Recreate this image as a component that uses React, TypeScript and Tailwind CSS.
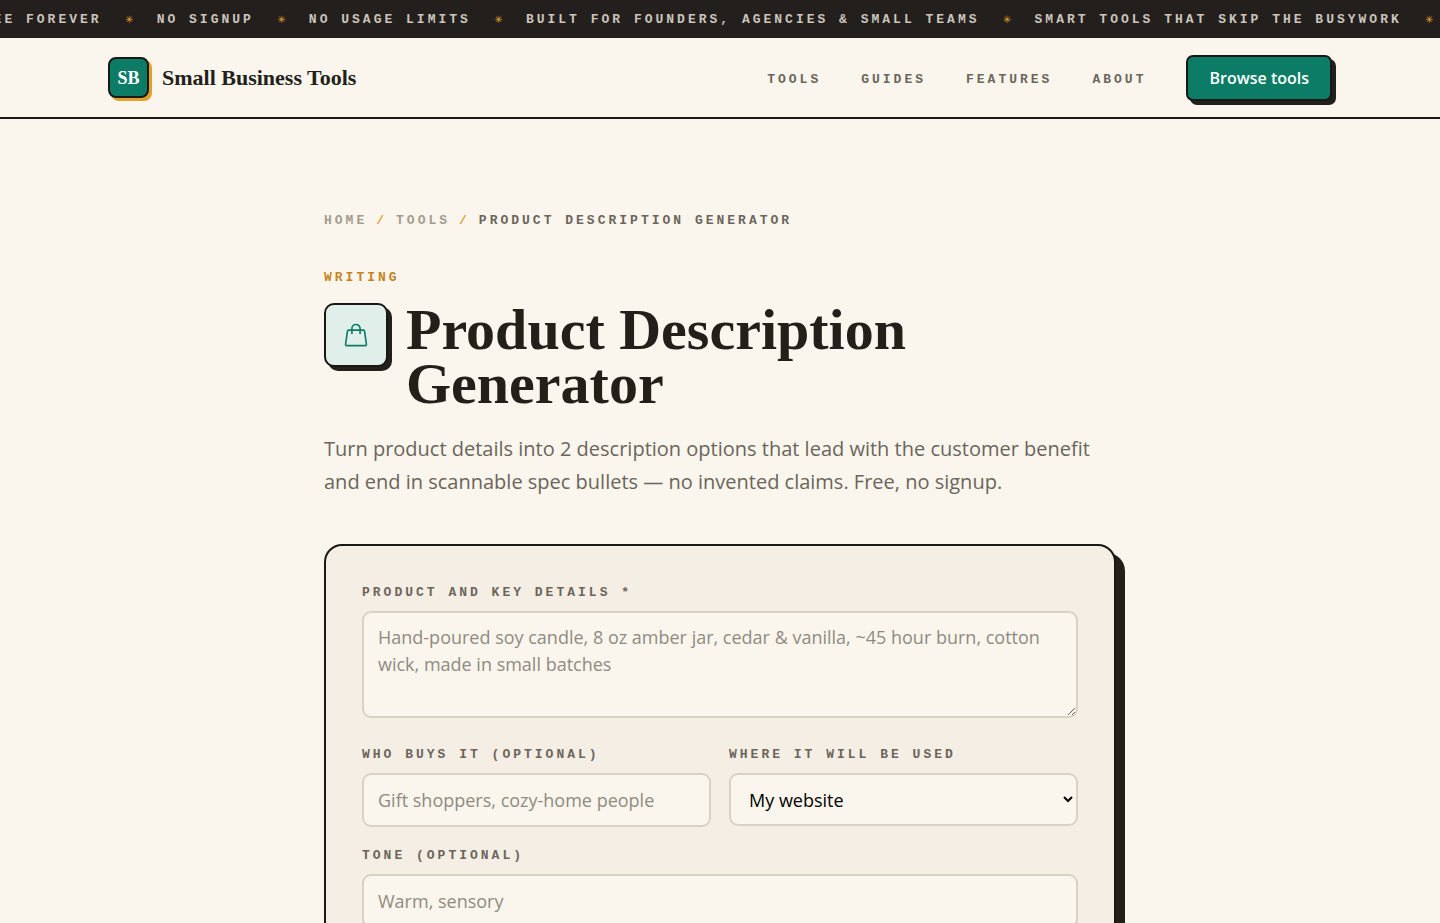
import React from "react";

const mono = "font-['Liberation_Mono',monospace] text-[13px] leading-[21px] font-bold tracking-[3px] uppercase";
const serif = "font-['Liberation_Serif',serif] font-bold";
const field =
  "w-full rounded-[9px] border-2 border-[#d6d3c6] bg-[#faf6ed] px-3.5 text-lg leading-[27px] placeholder:text-[#8f8b81]";

const perks = [
  "Free forever",
  "No signup",
  "No usage limits",
  "Built for founders, agencies & small teams",
  "Smart tools that skip the busywork",
];

const Ticker = () => (
  <div className="overflow-hidden bg-[#231f1c] pt-[9px] pb-2">
    <ul className={`-ml-7 flex items-center whitespace-nowrap text-[#cbc5bd] ${mono}`}>
      {perks.map((perk) => (
        <li key={perk} className="flex shrink-0 items-center">
          {perk}
          <span className="w-[55px] text-center font-['DejaVu_Sans',sans-serif] text-[10px] font-normal tracking-normal text-[#e0a02c]">
            ✳
          </span>
        </li>
      ))}
    </ul>
  </div>
);

const Header = () => (
  <header className="border-b-2 border-[#1a1815]">
    <div className="mx-auto flex h-[79px] max-w-[1224px] items-center justify-between">
      <a href="/" className="flex items-center gap-[13px]">
        <span
          className={`flex size-[41px] items-center justify-center rounded-lg border-2 border-[#1a1815] bg-[#0d7c66] text-lg text-white shadow-[3px_3px_0_#e0a02c] ${serif}`}
        >
          SB
        </span>
        <span className={`text-[22px] text-[#231f1a] ${serif}`}>Small Business Tools</span>
      </a>
      <div className="flex items-center gap-10">
        <nav className={`flex gap-10 pt-[3px] text-[#6b655b] ${mono}`}>
          <a href="/tools">Tools</a>
          <a href="/guides">Guides</a>
          <a href="/features">Features</a>
          <a href="/about">About</a>
        </nav>
        <a
          href="/tools"
          className="flex h-[46px] items-center rounded-[7px] border-2 border-[#1a1815] bg-[#0d7c66] px-[21px] text-base font-semibold text-white shadow-[4px_4px_0_#231f1c]"
        >
          Browse tools
        </a>
      </div>
    </div>
  </header>
);

const BagIcon = () => (
  <svg
    viewBox="0 0 24 24"
    className="size-[26px]"
    fill="none"
    stroke="#0d7c66"
    strokeWidth="1.5"
    strokeLinecap="round"
    strokeLinejoin="round"
    aria-hidden="true"
  >
    <path d="M15.75 10.5V6a3.75 3.75 0 1 0-7.5 0v4.5M5.1 7.5h13.8c.5 0 .9.35.98.85l1.75 12.2c.09.64-.4 1.2-1.05 1.2H3.42c-.65 0-1.14-.56-1.05-1.2l1.75-12.2c.08-.5.48-.85.98-.85Z" />
  </svg>
);

const GeneratorForm = () => (
  <form className="mt-[46px] rounded-[18px] border-2 border-[#1a1815] bg-[#f5eee4] p-9 shadow-[9px_9px_0_#231f1a]">
    <label htmlFor="details" className={`mb-2 block text-[#6b655b] ${mono}`}>
      Product and key details *
    </label>
    <textarea
      id="details"
      rows={3}
      className={`block py-[11px] ${field}`}
      placeholder="Hand-poured soy candle, 8 oz amber jar, cedar & vanilla, ~45 hour burn, cotton wick, made in small batches"
    />
    <div className="mt-[26px] grid grid-cols-2 gap-[18px]">
      <div>
        <label htmlFor="buyers" className={`mb-2 block text-[#6b655b] ${mono}`}>
          Who buys it (optional)
        </label>
        <input
          id="buyers"
          className={`block h-[54px] ${field}`}
          placeholder="Gift shoppers, cozy-home people"
        />
      </div>
      <div>
        <label htmlFor="channel" className={`mb-2 block text-[#6b655b] ${mono}`}>
          Where it will be used
        </label>
        <select id="channel" className={`block h-[53px] text-black ${field}`}>
          <option>My website</option>
          <option>Etsy</option>
          <option>Amazon</option>
        </select>
      </div>
    </div>
    <label htmlFor="tone" className={`mt-[18px] mb-2 block text-[#6b655b] ${mono}`}>
      Tone (optional)
    </label>
    <input id="tone" className={`block h-[54px] ${field}`} placeholder="Warm, sensory" />
  </form>
);

const App = () => {
  return (
    <div className="h-screen overflow-hidden bg-[#faf6ed] font-['Open_Sans',sans-serif]">
      <Ticker />
      <Header />
      <main className="mx-auto max-w-[792px] pt-[91px]">
        <nav aria-label="Breadcrumb" className={`flex gap-[9px] text-[#a39c8e] ${mono}`}>
          <a href="/">Home</a>
          <span className="text-[#e0a02c]">/</span>
          <a href="/tools">Tools</a>
          <span className="text-[#e0a02c]">/</span>
          <span className="text-[#6b655b]">Product Description Generator</span>
        </nav>
        <p className={`mt-9 text-[#c4841d] ${mono}`}>Writing</p>
        <div className="mt-[15px] flex items-start gap-[18px]">
          <span className="flex size-16 shrink-0 items-center justify-center rounded-[10px] border-2 border-[#1a1815] bg-[#e0efe9] shadow-[4px_4px_0_#231f1a]">
            <BagIcon />
          </span>
          <h1 className={`max-w-[600px] text-[58px] leading-[54px] text-[#231f1a] ${serif}`}>
            Product Description Generator
          </h1>
        </div>
        <p className="mt-[21px] text-xl leading-[33px] text-[#6b655b]">
          Turn product details into 2 description options that lead with the customer benefit and end in
          scannable spec bullets — no invented claims. Free, no signup.
        </p>
        <GeneratorForm />
      </main>
    </div>
  );
};

export default App;
